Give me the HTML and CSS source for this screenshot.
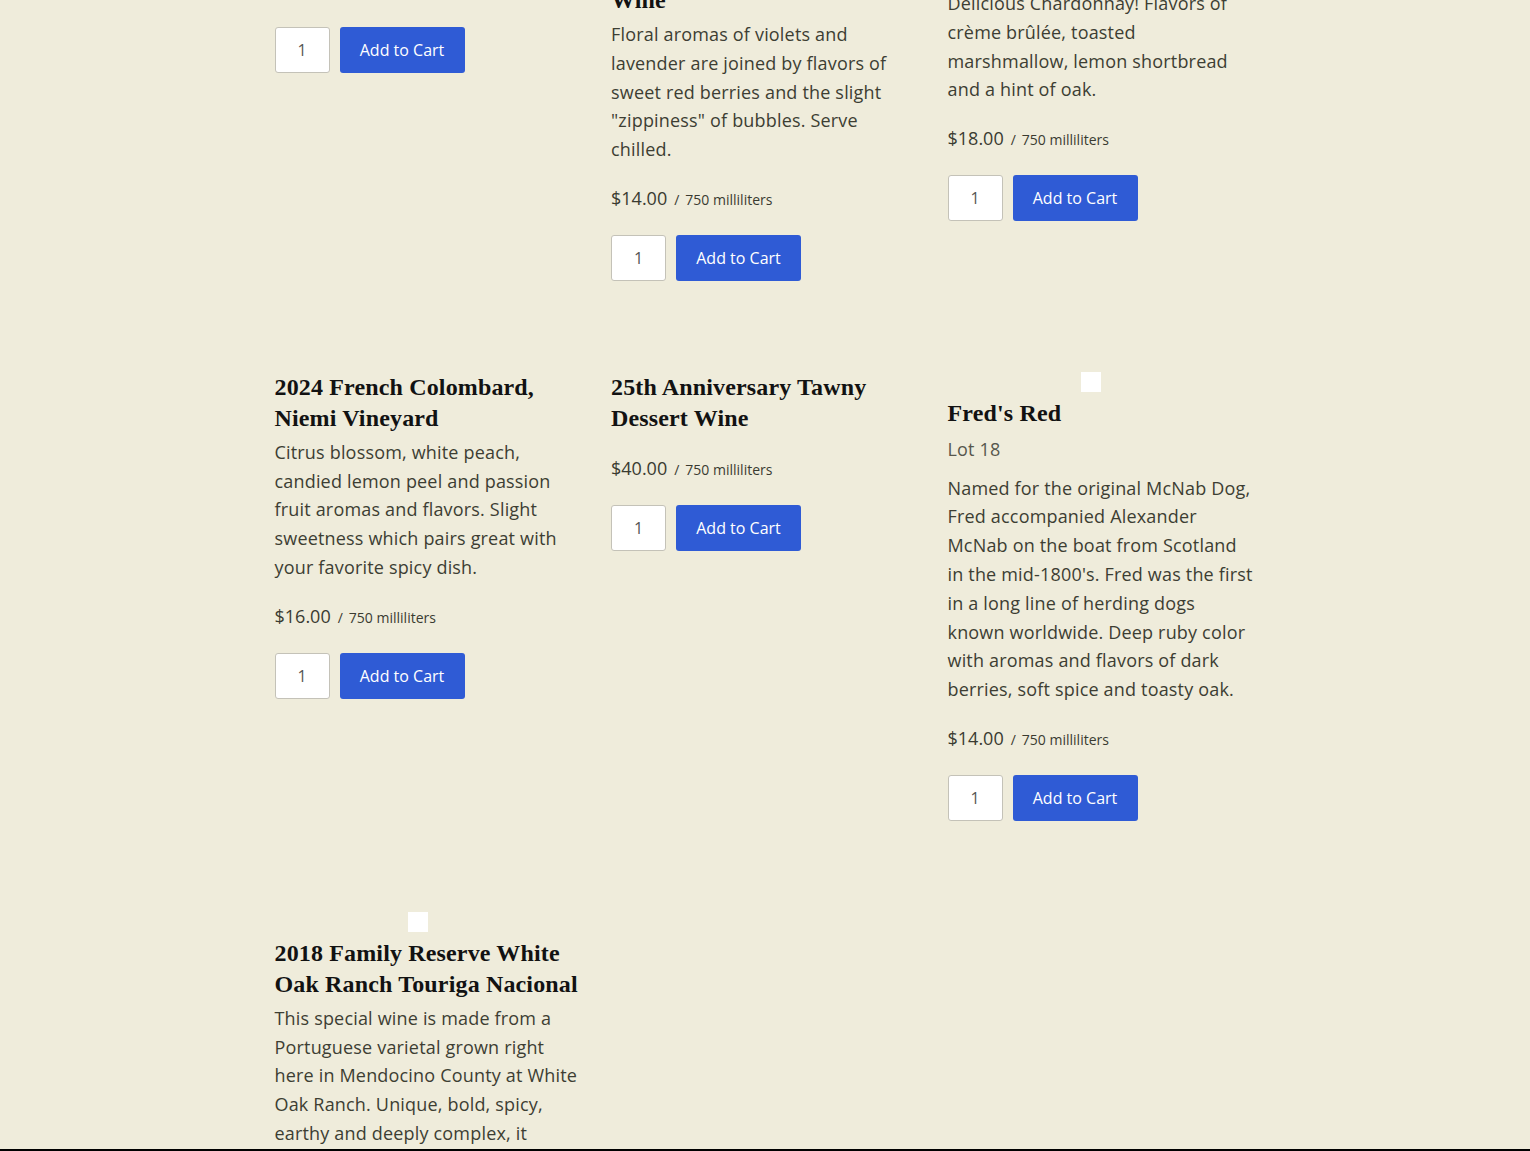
FILE: index.html
```html
<!DOCTYPE html>
<html lang="en">
<head>
<meta charset="utf-8">
<title>Wines</title>
<link rel="stylesheet" href="styles.css">
</head>
<body>
<main class="shop">
  <div class="grid">
    <article class="card">
      <h3 class="name">2023 Dry Rosé of Syrah</h3>
      <p class="desc">Bright strawberry and melon.</p>
      <div class="price"><span class="amount">$16.00</span><span class="sep">/</span><span class="unit">750 milliliters</span></div>
      <form class="buy"><input class="qty" type="text" value="1"><button class="add" type="button">Add to Cart</button></form>
    </article>
    <article class="card">
      <h3 class="name">2022 Sparkling Brut<br>Rosé of Pinot Noir,<br>Niemi Vineyard Estate<br>Wine</h3>
      <p class="desc">Floral aromas of violets and lavender are joined by flavors of sweet red berries and the slight "zippiness" of bubbles. Serve chilled.</p>
      <div class="price"><span class="amount">$14.00</span><span class="sep">/</span><span class="unit">750 milliliters</span></div>
      <form class="buy"><input class="qty" type="text" value="1"><button class="add" type="button">Add to Cart</button></form>
    </article>
    <article class="card">
      <h3 class="name">2023 Reserve Chardonnay,<br>Niemi Vineyard,<br>Mendocino County</h3>
      <p class="desc">Delicious Chardonnay! Flavors of crème brûlée, toasted marshmallow, lemon shortbread and a hint of oak.</p>
      <div class="price"><span class="amount">$18.00</span><span class="sep">/</span><span class="unit">750 milliliters</span></div>
      <form class="buy"><input class="qty" type="text" value="1"><button class="add" type="button">Add to Cart</button></form>
    </article>

    <article class="card">
      <h3 class="name">2024 French Colombard, Niemi Vineyard</h3>
      <p class="desc">Citrus blossom, white peach, candied lemon peel and passion fruit aromas and flavors. Slight sweetness which pairs great with your favorite spicy dish.</p>
      <div class="price"><span class="amount">$16.00</span><span class="sep">/</span><span class="unit">750 milliliters</span></div>
      <form class="buy"><input class="qty" type="text" value="1"><button class="add" type="button">Add to Cart</button></form>
    </article>
    <article class="card">
      <h3 class="name">25th Anniversary Tawny Dessert Wine</h3>
      <div class="price"><span class="amount">$40.00</span><span class="sep">/</span><span class="unit">750 milliliters</span></div>
      <form class="buy"><input class="qty" type="text" value="1"><button class="add" type="button">Add to Cart</button></form>
    </article>
    <article class="card">
      <div class="thumb"></div>
      <h3 class="name">Fred's Red</h3>
      <p class="lot">Lot 18</p>
      <p class="desc">Named for the original McNab Dog, Fred accompanied Alexander McNab on the boat from Scotland in the mid-1800's. Fred was the first in a long line of herding dogs known worldwide. Deep ruby color with aromas and flavors of dark berries, soft spice and toasty oak.</p>
      <div class="price"><span class="amount">$14.00</span><span class="sep">/</span><span class="unit">750 milliliters</span></div>
      <form class="buy"><input class="qty" type="text" value="1"><button class="add" type="button">Add to Cart</button></form>
    </article>

    <article class="card">
      <div class="thumb"></div>
      <h3 class="name">2018 Family Reserve White Oak Ranch Touriga Nacional</h3>
      <p class="desc">This special wine is made from a Portuguese varietal grown right here in Mendocino County at White Oak Ranch. Unique, bold, spicy, earthy and deeply complex, it rewards patience and pairs beautifully with hearty dishes.</p>
      <div class="price"><span class="amount">$45.00</span><span class="sep">/</span><span class="unit">750 milliliters</span></div>
      <form class="buy"><input class="qty" type="text" value="1"><button class="add" type="button">Add to Cart</button></form>
    </article>
  </div>
</main>
<div class="bottom-bar"></div>
</body>
</html>
```

FILE: styles.css
```css
html, body {
  margin: 0;
  padding: 0;
  background: #efecdb;
}

body {
  font-family: "Open Sans", "Liberation Sans", sans-serif;
  color: #3d3e33;
  overflow: hidden;
  height: 1151px;
}

.shop {
  width: 981px;
  margin: 0 auto;
}

.grid {
  display: grid;
  grid-template-columns: repeat(3, 308px);
  column-gap: 28.5px;
  row-gap: 91px;
  align-items: start;
  margin-top: -108px;
}

.card {
  display: flex;
  flex-direction: column;
  align-items: flex-start;
}

.thumb {
  width: 20px;
  height: 20px;
  background: #ffffff;
  margin: 0 0 6px 133px;
}

.name {
  font-family: "Liberation Serif", "Times New Roman", serif;
  font-weight: 700;
  font-size: 24px;
  line-height: 31px;
  color: #121212;
  margin: 0 0 4px;
  letter-spacing: 0.15px;
}

.lot {
  margin: 2px 0 10px;
  font-size: 18px;
  line-height: 28.8px;
  color: #57574d;
  letter-spacing: 0.18px;
}

.desc {
  margin: 0 0 4px;
  font-size: 18px;
  line-height: 28.8px;
  color: #3d3e33;
  letter-spacing: 0.18px;
}

.price {
  margin-top: 16px;
  line-height: 28.8px;
  color: #3a3b31;
}

.amount {
  font-size: 18px;
}

.sep {
  font-size: 14px;
  margin: 0 6px 0 7px;
}

.unit {
  font-size: 14px;
}

.buy {
  display: flex;
  gap: 10px;
  margin: 20px 0 0;
}

.qty {
  box-sizing: border-box;
  width: 55px;
  height: 46px;
  border: 1px solid #c4c2b8;
  border-radius: 3px;
  background: #ffffff;
  font-family: "Open Sans", "Liberation Sans", sans-serif;
  font-size: 16px;
  color: #555;
  text-align: center;
  padding: 0;
}

.add {
  box-sizing: border-box;
  width: 125px;
  height: 46px;
  border: none;
  border-radius: 3px;
  background: #2f5bd5;
  color: #ffffff;
  font-family: "Open Sans", "Liberation Sans", sans-serif;
  font-size: 16px;
  padding: 0;
  cursor: pointer;
}

.bottom-bar {
  position: fixed;
  left: 0;
  right: 0;
  bottom: 0;
  height: 2px;
  background: #000;
}
```
